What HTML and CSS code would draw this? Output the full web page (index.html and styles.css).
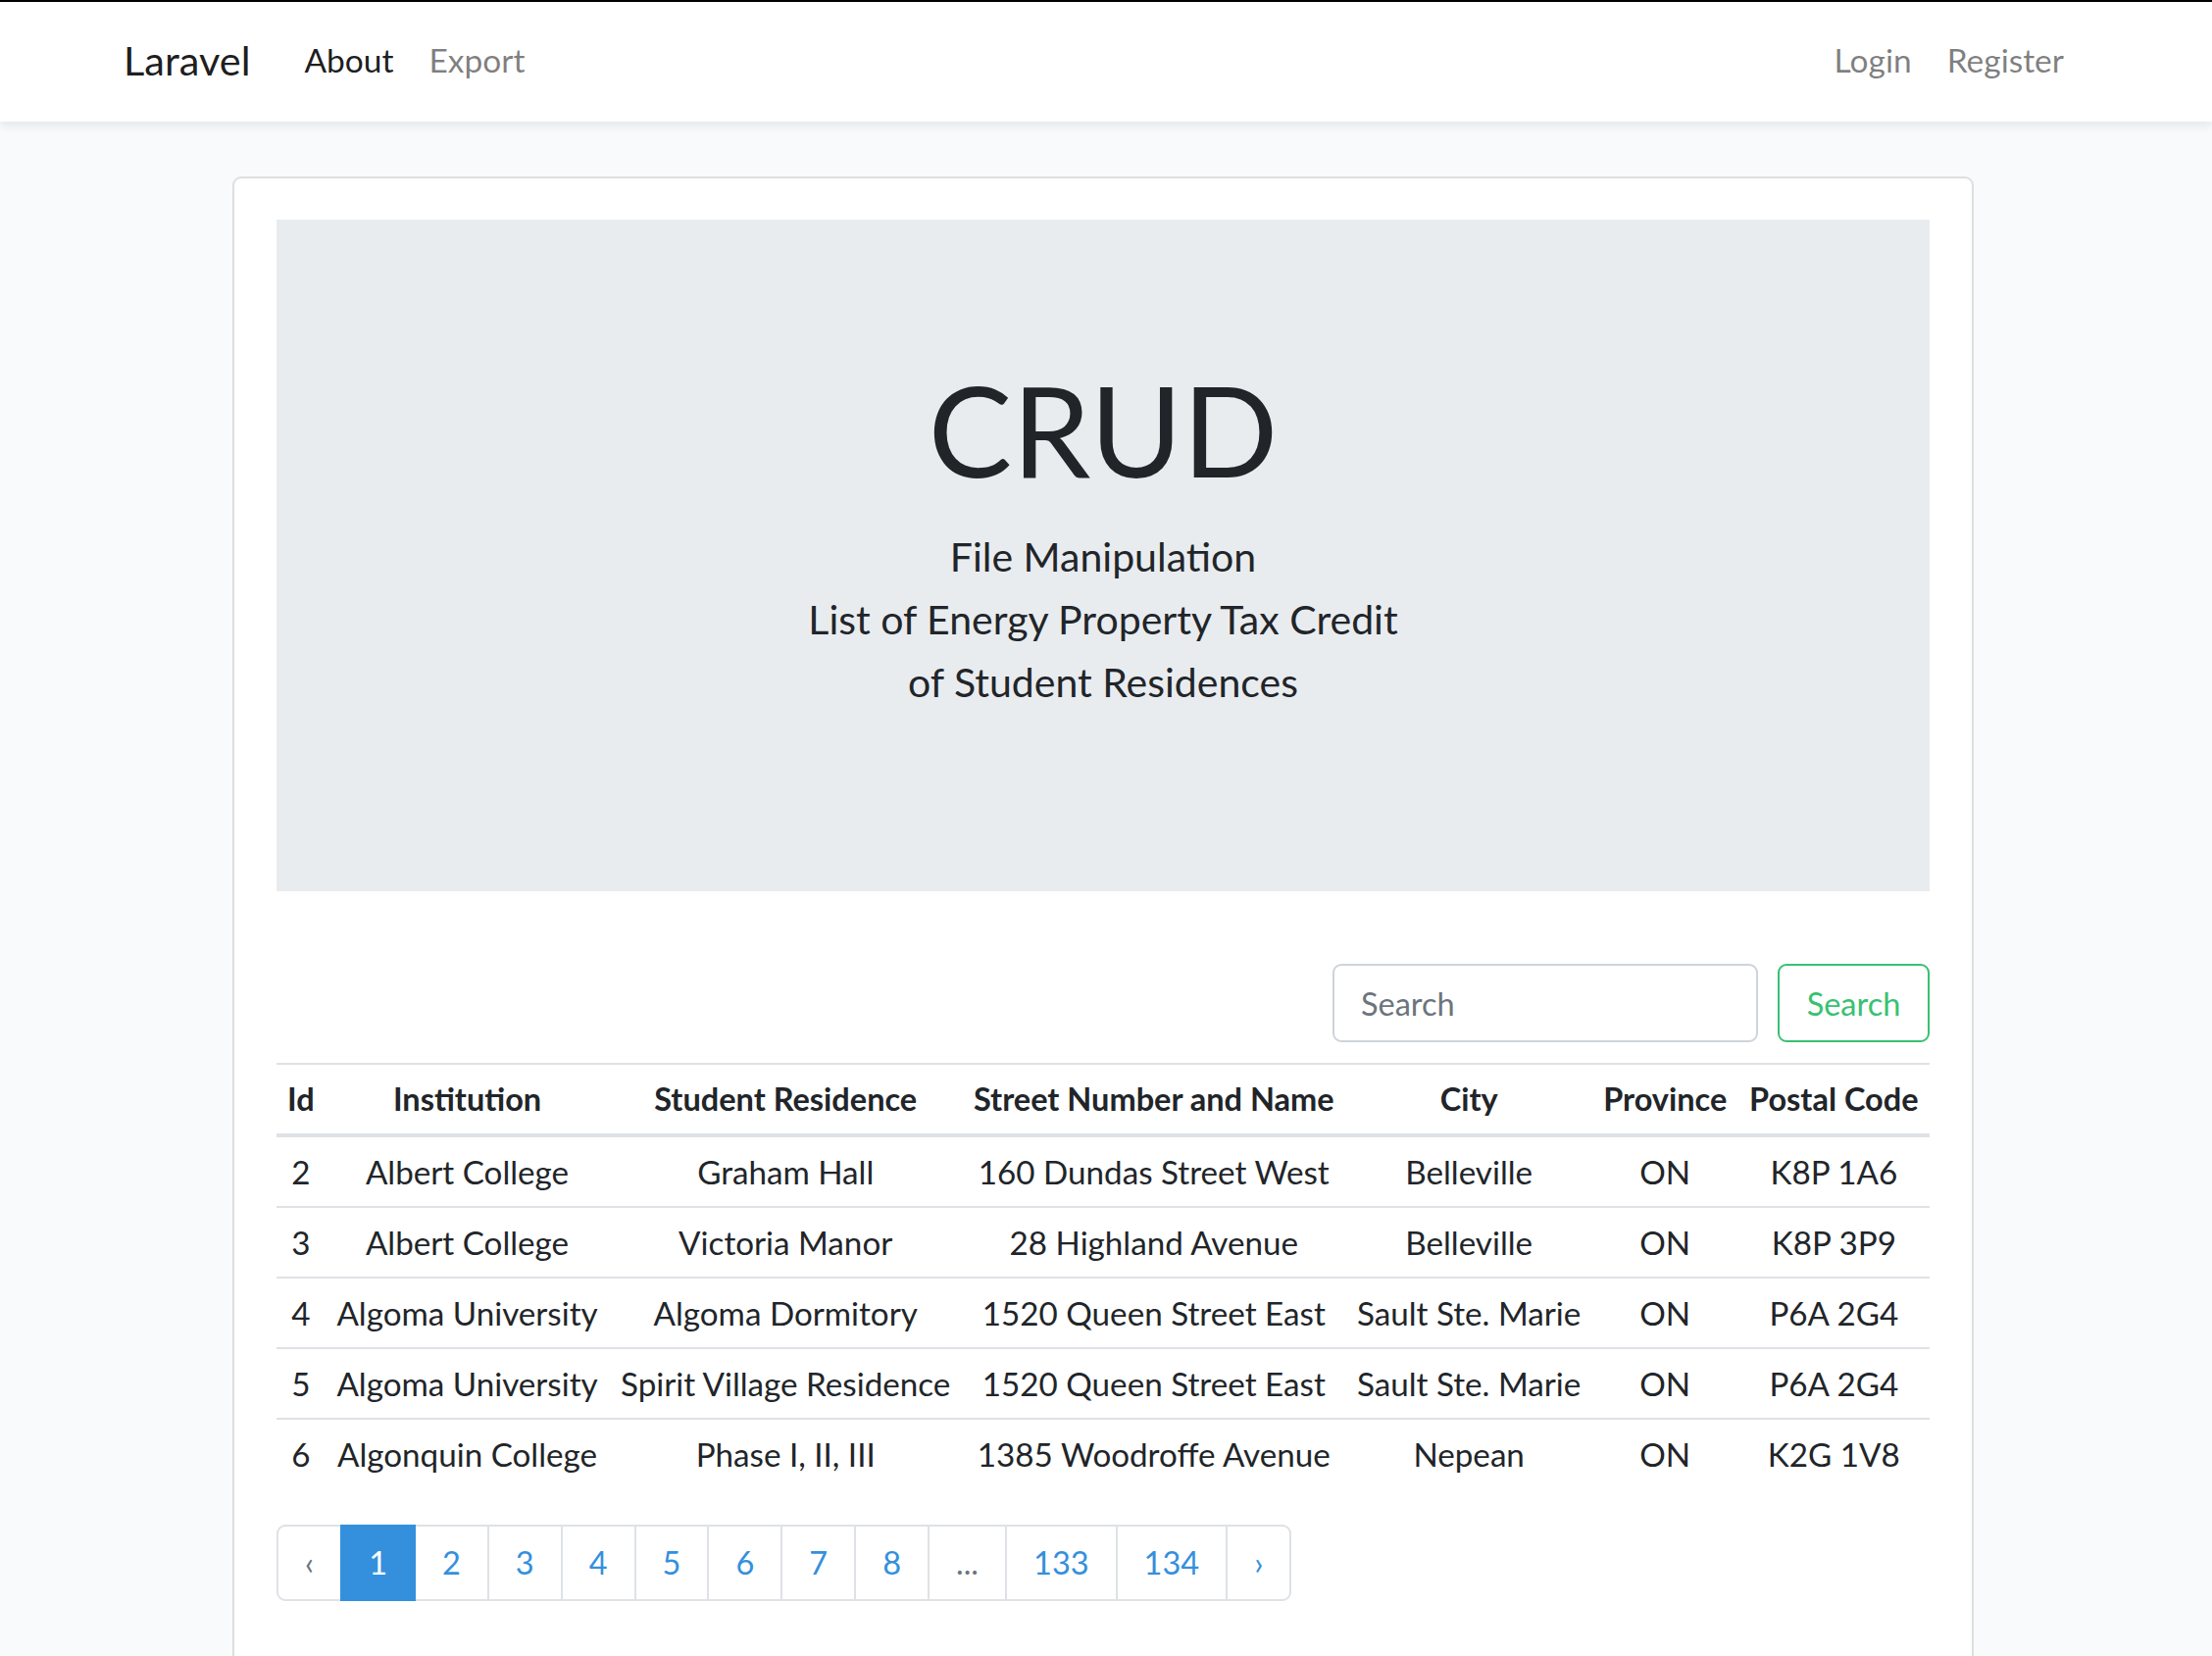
FILE: index.html
```html
<!DOCTYPE html>
<html lang="en">
<head>
<meta charset="utf-8">
<title>Laravel</title>
<link rel="stylesheet" href="styles.css">
</head>
<body>
<nav class="navbar">
  <div class="nav-inner">
    <a class="brand" href="#">Laravel</a>
    <ul class="nav-list">
      <li><a class="nav-link active" href="#">About</a></li>
      <li><a class="nav-link" href="#">Export</a></li>
    </ul>
    <ul class="nav-list nav-right">
      <li><a class="nav-link" href="#">Login</a></li>
      <li><a class="nav-link" href="#">Register</a></li>
    </ul>
  </div>
</nav>
<main class="main">
  <div class="card">
    <div class="jumbotron">
      <h1 class="display">CRUD</h1>
      <p class="lead">File Manipulation<br>List of Energy Property Tax Credit<br>of Student Residences</p>
    </div>
    <form class="search-form">
      <input class="search-input" type="search" placeholder="Search">
      <button class="search-btn" type="button">Search</button>
    </form>
    <table class="table">
      <thead>
        <tr>
          <th>Id</th>
          <th>Institution</th>
          <th>Student Residence</th>
          <th>Street Number and Name</th>
          <th>City</th>
          <th>Province</th>
          <th>Postal Code</th>
        </tr>
      </thead>
      <tbody>
        <tr><td>2</td><td>Albert College</td><td>Graham Hall</td><td>160 Dundas Street West</td><td>Belleville</td><td>ON</td><td>K8P 1A6</td></tr>
        <tr><td>3</td><td>Albert College</td><td>Victoria Manor</td><td>28 Highland Avenue</td><td>Belleville</td><td>ON</td><td>K8P 3P9</td></tr>
        <tr><td>4</td><td>Algoma University</td><td>Algoma Dormitory</td><td>1520 Queen Street East</td><td>Sault Ste. Marie</td><td>ON</td><td>P6A 2G4</td></tr>
        <tr><td>5</td><td>Algoma University</td><td>Spirit Village Residence</td><td>1520 Queen Street East</td><td>Sault Ste. Marie</td><td>ON</td><td>P6A 2G4</td></tr>
        <tr><td>6</td><td>Algonquin College</td><td>Phase I, II, III</td><td>1385 Woodroffe Avenue</td><td>Nepean</td><td>ON</td><td>K2G 1V8</td></tr>
      </tbody>
    </table>
    <ul class="pagination">
      <li class="page-item disabled"><span class="page-link">&lsaquo;</span></li>
      <li class="page-item active"><span class="page-link">1</span></li>
      <li class="page-item"><a class="page-link" href="#">2</a></li>
      <li class="page-item"><a class="page-link" href="#">3</a></li>
      <li class="page-item"><a class="page-link" href="#">4</a></li>
      <li class="page-item"><a class="page-link" href="#">5</a></li>
      <li class="page-item"><a class="page-link" href="#">6</a></li>
      <li class="page-item"><a class="page-link" href="#">7</a></li>
      <li class="page-item"><a class="page-link" href="#">8</a></li>
      <li class="page-item disabled"><span class="page-link">...</span></li>
      <li class="page-item"><a class="page-link" href="#">133</a></li>
      <li class="page-item"><a class="page-link" href="#">134</a></li>
      <li class="page-item"><a class="page-link" href="#">&rsaquo;</a></li>
    </ul>
  </div>
</main>
</body>
</html>
```
FILE: styles.css
```css
html, body {
  margin: 0;
  padding: 0;
}

body {
  background: #f8fafc;
  font-family: Lato, "Noto Sans", sans-serif;
  font-size: 32.5px;
  color: #212529;
}

a {
  text-decoration: none;
}

/* Navbar */
.navbar {
  border-top: 2px solid #000;
  background: #fff;
  height: 122px;
  box-shadow: 0 5px 9px rgba(0, 0, 0, 0.075);
  position: relative;
  z-index: 1;
}

.nav-inner {
  display: flex;
  align-items: center;
  height: 100%;
  box-sizing: border-box;
  padding: 0 133px 4px 126px;
  font-size: 33.5px;
}

.brand {
  font-size: 41.5px;
  color: rgba(0, 0, 0, 0.9);
  margin-right: 37px;
}

.nav-list {
  display: flex;
  list-style: none;
  margin: 0;
  padding: 0;
}

.nav-right {
  margin-left: auto;
}

.nav-link {
  display: block;
  padding: 0 18px;
  color: rgba(0, 0, 0, 0.5);
}

.nav-link.active {
  color: rgba(0, 0, 0, 0.9);
}

/* Main */
.main {
  padding: 56px 243px 0 237px;
}

.card {
  background: #fff;
  border: 2px solid rgba(0, 0, 0, 0.125);
  border-radius: 9px;
  padding: 42px 43px 45px;
}

.jumbotron {
  background: #e9ecef;
  height: 685px;
  box-sizing: border-box;
  padding-top: 137px;
  text-align: center;
  margin-bottom: 74px;
}

.display {
  font-size: 128px;
  font-weight: 400;
  line-height: 1.2;
  margin: 0;
}

.lead {
  font-size: 41px;
  line-height: 64px;
  margin: 21px 0 0;
}

/* Search form */
.search-form {
  display: flex;
  justify-content: flex-end;
  gap: 20px;
  margin-bottom: 21px;
}

.search-input {
  width: 434px;
  height: 80px;
  box-sizing: border-box;
  border: 2px solid #ced4da;
  border-radius: 9px;
  padding: 0 27px;
  font: inherit;
  color: #495057;
  background: #fff;
  outline: none;
}

.search-input::placeholder {
  color: #6c757d;
}

.search-btn {
  width: 155px;
  height: 80px;
  box-sizing: border-box;
  border: 2px solid #38c172;
  border-radius: 9px;
  background: transparent;
  color: #38c172;
  font: inherit;
  padding: 0;
}

/* Table */
.table {
  width: 100%;
  border-collapse: collapse;
  margin-bottom: 37px;
}

.table th,
.table td {
  padding: 11px;
  line-height: 48px;
  border-top: 2px solid #dee2e6;
  text-align: center;
  vertical-align: top;
  white-space: nowrap;
}

.table td {
  font-size: 33.2px;
}

.table thead th {
  border-bottom: 4px solid #dee2e6;
  font-weight: 700;
}

/* Pagination */
.pagination {
  display: flex;
  list-style: none;
  padding: 0;
  margin: 0 0 37px;
}

.page-link {
  display: block;
  padding: 17px 27px;
  line-height: 40px;
  border: 2px solid #dee2e6;
  margin-left: -2px;
  color: #3490dc;
  background: #fff;
  position: relative;
}

.page-item:first-child .page-link {
  margin-left: 0;
  border-radius: 9px 0 0 9px;
}

.page-item:last-child .page-link {
  border-radius: 0 9px 9px 0;
}

.page-item.active .page-link {
  background: #3490dc;
  border-color: #3490dc;
  color: #fff;
  z-index: 1;
}

.page-item.disabled .page-link {
  color: #6c757d;
}
```
